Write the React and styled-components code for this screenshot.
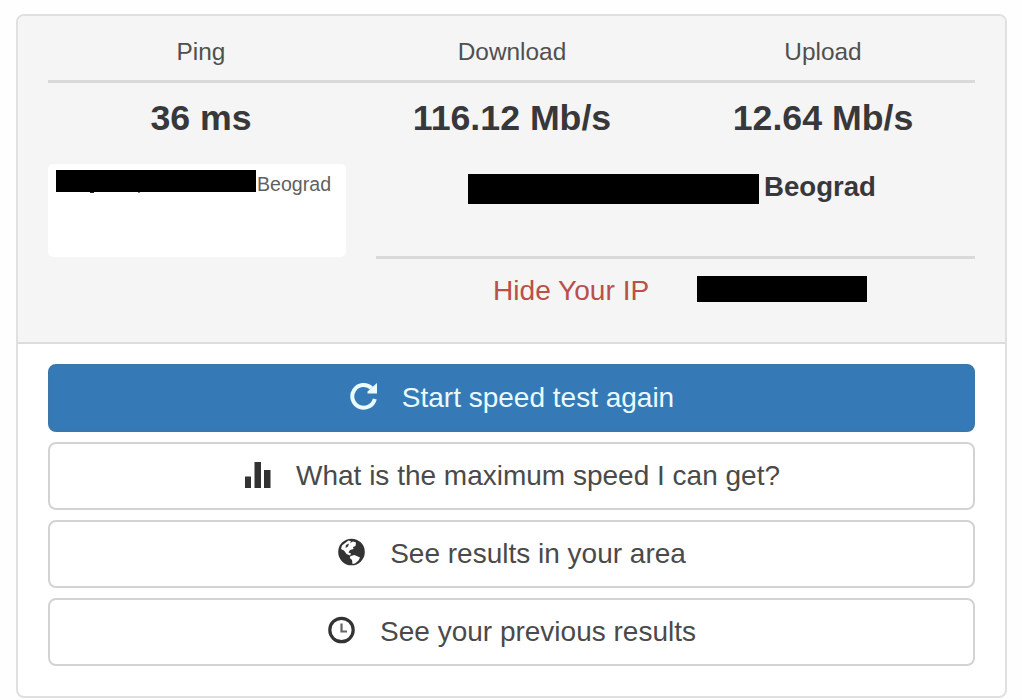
import React from 'react'
import styled, { createGlobalStyle } from 'styled-components'

const GlobalStyle = createGlobalStyle`
    * {
        box-sizing:border-box;
    }
    body {
        margin:0;
        background:#fefefe;
        color:#333;
        font-family:"Liberation Sans", Arial, sans-serif;
    }
`;

const Panel = styled.div`
    width:991px;
    height:684px;
    margin:14px 0 0 16px;
    border:2px solid #e0e0e0;
    border-radius:8px;
    overflow:hidden;
    background:#fff;
`;

const PanelHeader = styled.div`
    height:328px;
    padding:0 30px;
    background:#f5f5f5;
    border-bottom:2px solid #dcdcdc;
`;

const Columns = styled.div`
    display:grid;
    grid-template-columns:repeat(3, 1fr);
    margin:0 -3.5px 0 -2.5px;
    text-align:center;
`;

const Label = styled.div`
    height:64px;
    padding-top:22px;
    font-size:24.4px;
    line-height:28px;
    color:#505050;
`;

const Value = styled.div`
    height:81px;
    padding-top:15px;
    font-size:35.7px;
    font-weight:700;
    line-height:40px;
    color:#38383a;
`;

const Divider = styled.div`
    height:3px;
    background:#d9d9d9;
`;

const Details = styled.div`
    display:flex;
    gap:30px;
`;

const ServerBox = styled.div`
    display:flex;
    align-items:flex-start;
    gap:1px;
    width:298px;
    height:93px;
    padding:6px 8px;
    border-radius:5px;
    background:#fff;
    font-size:19.6px;
    line-height:28px;
    color:#606060;
`;

const Redacted = styled.span`
    flex:none;
    width:${(props) => props.$width}px;
    height:${(props) => props.$height}px;
    background:#000;
`;

/* tails of the covered letters stick out below the bar */
const RedactedName = styled(Redacted)`
    position:relative;
    &::before, &::after{
        content:"";
        position:absolute;
        top:100%;
        left:34px;
        width:4px;
        height:1px;
        background:#222;
    }
    &::after{
        left:82px;
        width:2px;
        background:#777;
    }
`;

const Connection = styled.div`
    flex:1;
`;

const Provider = styled.div`
    display:flex;
    gap:5px;
    height:92px;
    padding:10px 0 0 92px;
    font-size:27.6px;
    font-weight:700;
    line-height:25px;
    color:#38383a;
`;

const Address = styled.div`
    display:flex;
    gap:48px;
    padding:17px 0 0 117px;
`;

const HideLink = styled.a`
    font-size:28.1px;
    line-height:29px;
    color:#b9504b;
`;

const Actions = styled.div`
    display:flex;
    flex-direction:column;
    gap:10px;
    padding:20px 30px;
`;

const Button = styled.button`
    display:flex;
    align-items:center;
    justify-content:center;
    gap:24px;
    height:68px;
    padding:0 0 0 1px;
    border:2px solid ${(props) => (props.$primary ? '#3a77ab' : '#d3d3d5')};
    border-radius:8px;
    background:${(props) => (props.$primary ? '#357ab7' : '#fff')};
    color:${(props) => (props.$primary ? '#e9fbff' : '#4a4a4a')};
    font-family:inherit;
    font-size:28px;
    line-height:32px;
`;

const Icon = styled.svg`
    flex:none;
    width:28px;
    height:28px;
    margin-bottom:5px;
    color:${(props) => (props.$light ? '#e9fbff' : '#333')};
`;

const RepeatIcon = () => (
  <Icon $light viewBox="0 0 28 28">
    <path d="M21.500 6A11.400 11.400 0 1 0 24.800 17" fill="none" stroke="currentColor" strokeWidth="4" />
    <path d="M27 1v10.500h-9.500v-2z" fill="currentColor" />
  </Icon>
)

const StatsIcon = () => (
  <Icon viewBox="0 0 28 28">
    <path d="M1 16.500h6V28H1zM10.500 2h6.500v26h-6.500zM20 10h6.500v18H20z" fill="currentColor" />
  </Icon>
)

const GlobeIcon = () => (
  <Icon viewBox="0 0 28 28">
    <circle cx="13.500" cy="14" r="13.300" fill="currentColor" />
    <path d="M6.500 5.500L10.500 2.500L13 3.200L12 5L15 3.500L18 4.500L17.500 8L15 9L15.500 11L12 12L10.500 14.500L13 15.500L12 17.500L8.500 16L6 12.500L3 11L4 7.500z" fill="#fff" />
    <path d="M12.500 18L16.500 17L22 19.500L20.500 22.500L17 25.500L14.500 26L14 22L11.800 20z" fill="#fff" />
    <path d="M8 7l3-1.500-1 3-2.500 1.500z" fill="currentColor" />
  </Icon>
)

const ClockIcon = () => (
  <Icon viewBox="0 0 28 28">
    <circle cx="13.500" cy="14" r="11.700" fill="none" stroke="currentColor" strokeWidth="3.200" />
    <path d="M13.500 7.500v8h5.500" fill="none" stroke="#666" strokeWidth="2.200" />
  </Icon>
)

const results = [
  { label: 'Ping', value: '36 ms' },
  { label: 'Download', value: '116.12 Mb/s' },
  { label: 'Upload', value: '12.64 Mb/s' },
]

export default function App() {
  return (
    <>
      <GlobalStyle />
      <Panel>
        <PanelHeader>
          <Columns>
            {results.map((item) => <Label key={item.label}>{item.label}</Label>)}
          </Columns>
          <Divider />
          <Columns>
            {results.map((item) => <Value key={item.label}>{item.value}</Value>)}
          </Columns>
          <Details>
            <ServerBox>
              <RedactedName $width={200} $height={22} />
              Beograd
            </ServerBox>
            <Connection>
              <Provider>
                <Redacted $width={291} $height={30} />
                Beograd
              </Provider>
              <Divider />
              <Address>
                <HideLink>Hide Your IP</HideLink>
                <Redacted $width={170} $height={26} />
              </Address>
            </Connection>
          </Details>
        </PanelHeader>
        <Actions>
          <Button $primary>
            <RepeatIcon />
            Start speed test again
          </Button>
          <Button>
            <StatsIcon />
            What is the maximum speed I can get?
          </Button>
          <Button>
            <GlobeIcon />
            See results in your area
          </Button>
          <Button>
            <ClockIcon />
            See your previous results
          </Button>
        </Actions>
      </Panel>
    </>
  )
}
